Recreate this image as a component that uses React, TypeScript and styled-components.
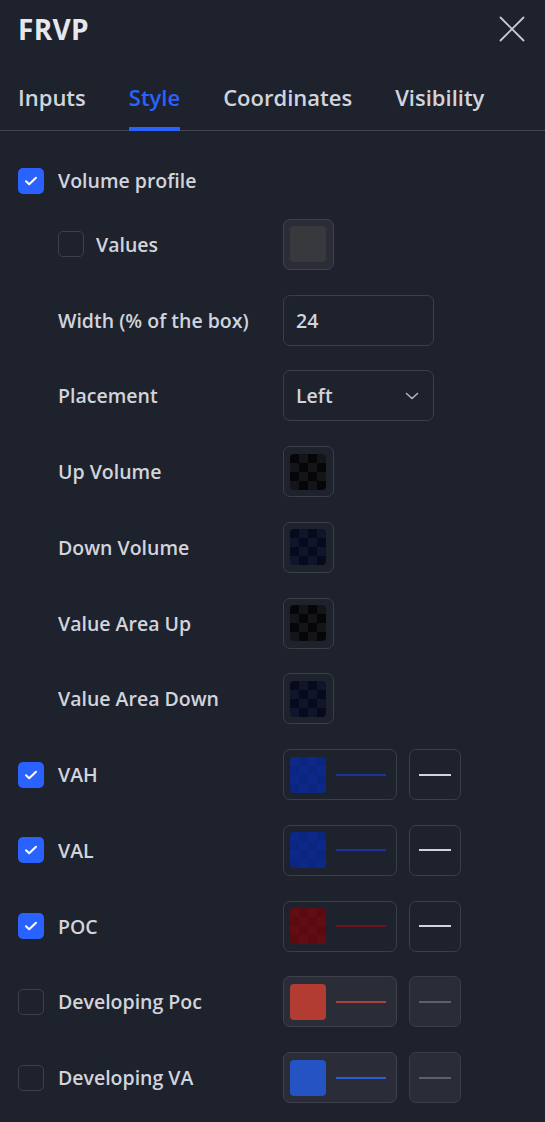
import React from "react";
import styled, { createGlobalStyle, css } from "styled-components";

const Global = createGlobalStyle`
  html, body { margin: 0; padding: 0; background: #1e222d; }
  body { font-family: "Open Sans", "Noto Sans", sans-serif; color: #d1d4dc; }
`;

const Dialog = styled.div`
  width: 545px;
  min-height: 1122px;
  background: #1e222d;
  box-sizing: border-box;
`;

const Header = styled.div`
  height: 58px;
  display: flex;
  align-items: center;
  justify-content: space-between;
  padding: 0 20px 0 18px;
`;

const Title = styled.div`
  font-size: 28px;
  font-weight: 700;
  color: #e6e8ee;
  letter-spacing: 0.3px;
`;

const CloseBtn = styled.button`
  width: 26px;
  height: 26px;
  padding: 0;
  border: none;
  background: none;
  display: flex;
  align-items: center;
  justify-content: center;
  color: #d1d4dc;
`;

const TabBar = styled.div`
  display: flex;
  gap: 43px;
  padding: 0 18px;
  border-bottom: 1px solid #434651;
`;

const Tab = styled.div<{ $active?: boolean }>`
  font-size: 22px;
  font-weight: 600;
  line-height: 28px;
  padding: 25px 0 16px;
  color: ${(p) => (p.$active ? "#2962ff" : "#d1d4dc")};
  border-bottom: 4px solid ${(p) => (p.$active ? "#2962ff" : "transparent")};
  margin-bottom: -1px;
`;

const Content = styled.div`
  padding: 36px 18px 0;
  display: flex;
  flex-direction: column;
  gap: 24.75px;
`;

const Row = styled.div<{ $tall?: boolean }>`
  display: grid;
  grid-template-columns: 265px auto;
  align-items: center;
  min-height: ${(p) => (p.$tall ? "51px" : "26px")};
`;

const LabelCell = styled.div<{ $indent?: number; $gap?: number }>`
  display: flex;
  align-items: center;
  gap: ${(p) => p.$gap ?? 14}px;
  padding-left: ${(p) => p.$indent ?? 0}px;
  font-size: 19.5px;
  font-weight: 600;
  color: #d1d4dc;
`;

const Box = styled.div<{ $checked?: boolean }>`
  width: 26px;
  height: 26px;
  box-sizing: border-box;
  border-radius: 5px;
  display: flex;
  align-items: center;
  justify-content: center;
  ${(p) =>
    p.$checked
      ? css`background: #2962ff;`
      : css`border: 1.5px solid #3c404b; background: transparent;`}
`;

const Controls = styled.div`
  display: flex;
  gap: 12px;
  align-items: center;
`;

const Field = styled.div<{ $w: number; $disabled?: boolean }>`
  width: ${(p) => p.$w}px;
  height: 51px;
  box-sizing: border-box;
  border: 1.5px solid ${(p) => (p.$disabled ? "#3e424d" : "#3a3e49")};
  border-radius: 7px;
  background: ${(p) => (p.$disabled ? "#2a2d37" : "transparent")};
  display: flex;
  align-items: center;
  padding: 0 6px;
  gap: 10px;
  font-size: 19.5px;
  font-weight: 600;
  color: #d1d4dc;
`;

const TextField = styled(Field)`
  padding: 0 12px;
  justify-content: space-between;
`;

const Swatch = styled.div<{ $a: string; $b: string; $solid?: boolean }>`
  width: 36px;
  height: 36px;
  border-radius: 4px;
  flex: none;
  ${(p) =>
    p.$solid
      ? css`background: ${p.$a};`
      : css`
          background-color: ${p.$a};
          background-image: linear-gradient(45deg, ${p.$b} 25%, transparent 25%, transparent 75%, ${p.$b} 75%),
            linear-gradient(45deg, ${p.$b} 25%, transparent 25%, transparent 75%, ${p.$b} 75%);
          background-size: 18px 18px;
          background-position: 0 0, 9px 9px;
        `}
`;

const LineSample = styled.div<{ $color: string; $h?: number }>`
  width: 50px;
  height: ${(p) => p.$h ?? 2}px;
  background: ${(p) => p.$color};
`;

const StyleBtn = styled.div<{ $disabled?: boolean }>`
  width: 52px;
  height: 51px;
  box-sizing: border-box;
  border: 1.5px solid #3a3e49;
  border-radius: 7px;
  background: ${(p) => (p.$disabled ? "#2a2d37" : "transparent")};
  display: flex;
  align-items: center;
  justify-content: center;
`;

const StyleLine = styled.div<{ $disabled?: boolean }>`
  width: 32px;
  height: 2px;
  background: ${(p) => (p.$disabled ? "#5d606b" : "#d1d4dc")};
`;

const Check = ({ checked }: { checked?: boolean }) => (
  <Box $checked={checked}>
    {checked && (
      <svg width="16" height="16" viewBox="0 0 16 16">
        <path d="M3 8.3l3.2 3L13 4.8" fill="none" stroke="#fff" strokeWidth="2" strokeLinecap="round" strokeLinejoin="round" />
      </svg>
    )}
  </Box>
);

type Sw = { a: string; b: string; solid?: boolean };

const SwatchField = ({ sw, disabled }: { sw: Sw; disabled?: boolean }) => (
  <Field $w={51} $disabled={disabled}>
    <Swatch $a={sw.a} $b={sw.b} $solid={sw.solid} />
  </Field>
);

const LineControls = ({ sw, line, disabled }: { sw: Sw; line: string; disabled?: boolean }) => (
  <Controls>
    <Field $w={114} $disabled={disabled}>
      <Swatch $a={sw.a} $b={sw.b} $solid={sw.solid} />
      <LineSample $color={line} $h={2} />
    </Field>
    <StyleBtn $disabled={disabled}>
      <StyleLine $disabled={disabled} />
    </StyleBtn>
  </Controls>
);

const darkChecker: Sw = { a: "#060608", b: "#141519" };
const navyChecker: Sw = { a: "#070a1c", b: "#10152c" };
const blueChecker: Sw = { a: "#0c2888", b: "#0b2580" };
const redChecker: Sw = { a: "#620d13", b: "#5a0a10" };

export default function App() {
  return (
    <Dialog>
      <Global />
      <Header>
        <Title>FRVP</Title>
        <CloseBtn aria-label="close">
          <svg width="26" height="26" viewBox="0 0 26 26">
            <path d="M1.5 1.5l23 23M24.5 1.5l-23 23" stroke="#c8cad1" strokeWidth="1.8" strokeLinecap="round" />
          </svg>
        </CloseBtn>
      </Header>
      <TabBar>
        <Tab>Inputs</Tab>
        <Tab $active>Style</Tab>
        <Tab>Coordinates</Tab>
        <Tab>Visibility</Tab>
      </TabBar>
      <Content>
        <Row>
          <LabelCell>
            <Check checked />
            Volume profile
          </LabelCell>
        </Row>
        <Row $tall>
          <LabelCell $indent={40} $gap={12}>
            <Check />
            Values
          </LabelCell>
          <Controls>
            <SwatchField sw={{ a: "#38393c", b: "#38393c", solid: true }} disabled />
          </Controls>
        </Row>
        <Row $tall>
          <LabelCell $indent={40}>Width (% of the box)</LabelCell>
          <TextField $w={151}>24</TextField>
        </Row>
        <Row $tall>
          <LabelCell $indent={40}>Placement</LabelCell>
          <TextField $w={151}>
            Left
            <svg width="14" height="8" viewBox="0 0 14 8" style={{ marginRight: 2 }}>
              <path d="M1.5 1.5l5.5 5 5.5-5" fill="none" stroke="#b2b5be" strokeWidth="1.6" strokeLinecap="round" strokeLinejoin="round" />
            </svg>
          </TextField>
        </Row>
        <Row $tall>
          <LabelCell $indent={40}>Up Volume</LabelCell>
          <Controls>
            <SwatchField sw={darkChecker} />
          </Controls>
        </Row>
        <Row $tall>
          <LabelCell $indent={40}>Down Volume</LabelCell>
          <Controls>
            <SwatchField sw={navyChecker} />
          </Controls>
        </Row>
        <Row $tall>
          <LabelCell $indent={40}>Value Area Up</LabelCell>
          <Controls>
            <SwatchField sw={darkChecker} />
          </Controls>
        </Row>
        <Row $tall>
          <LabelCell $indent={40}>Value Area Down</LabelCell>
          <Controls>
            <SwatchField sw={navyChecker} />
          </Controls>
        </Row>
        <Row $tall>
          <LabelCell>
            <Check checked />
            VAH
          </LabelCell>
          <LineControls sw={blueChecker} line="#1a3597" />
        </Row>
        <Row $tall>
          <LabelCell>
            <Check checked />
            VAL
          </LabelCell>
          <LineControls sw={blueChecker} line="#1a3597" />
        </Row>
        <Row $tall>
          <LabelCell>
            <Check checked />
            POC
          </LabelCell>
          <LineControls sw={redChecker} line="#6e121b" />
        </Row>
        <Row $tall>
          <LabelCell>
            <Check />
            Developing Poc
          </LabelCell>
          <LineControls sw={{ a: "#b23c32", b: "#b23c32", solid: true }} line="#a8423b" disabled />
        </Row>
        <Row $tall>
          <LabelCell>
            <Check />
            Developing VA
          </LabelCell>
          <LineControls sw={{ a: "#2454c4", b: "#2454c4", solid: true }} line="#2f5cd0" disabled />
        </Row>
      </Content>
    </Dialog>
  );
}
